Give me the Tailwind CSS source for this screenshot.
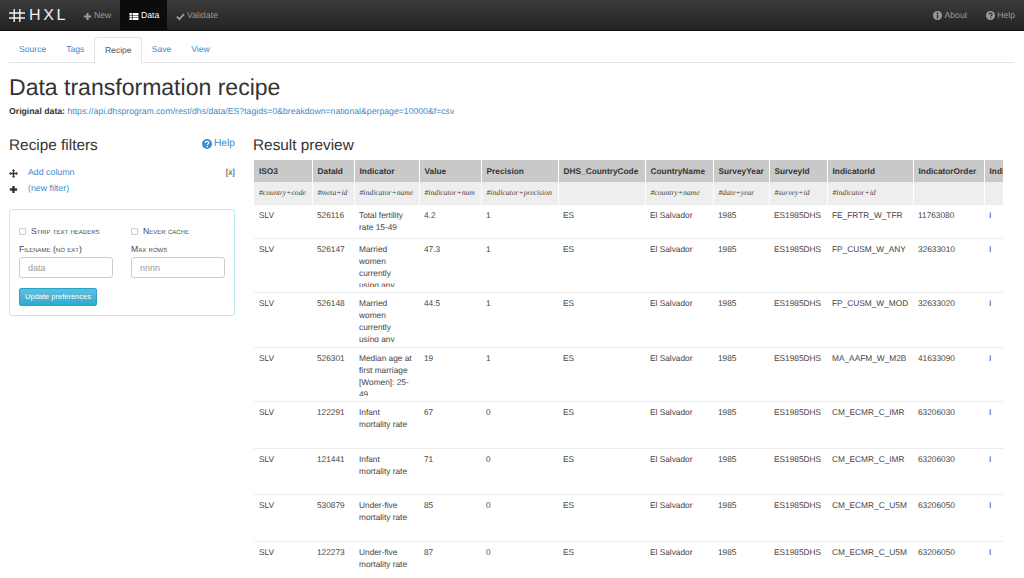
<!DOCTYPE html>
<html>
<head>
  <meta charset="utf-8">
  <script src="https://cdn.jsdelivr.net/npm/@tailwindcss/browser@4"></script>
  <script>
    const columns = [
      ['ISO3', '#country+code', 'w-[58px]'],
      ['DataId', '#meta+id', 'w-[42px]'],
      ['Indicator', '#indicator+name', 'w-[65px]'],
      ['Value', '#indicator+num', 'w-[62px]'],
      ['Precision', '#indicator+precision', 'w-[77px]'],
      ['DHS_CountryCode', '', 'w-[87px]'],
      ['CountryName', '#country+name', 'w-[68px]'],
      ['SurveyYear', '#date+year', 'w-[56px]'],
      ['SurveyId', '#survey+id', 'w-[58px]'],
      ['IndicatorId', '#indicator+id', 'w-[86px]'],
      ['IndicatorOrder', '', 'w-[71px]'],
      ['IndicatorType', '', 'w-[71px]'],
    ];

    // first item is the height of the clipped cell content
    const rows = [
      ['h-[24px]', 'SLV', '526116', 'Total fertility rate 15-49', '4.2', '1', 'FE_FRTR_W_TFR', '11763080'],
      ['h-[44px]', 'SLV', '526147', 'Married women currently using any method', '47.3', '1', 'FP_CUSM_W_ANY', '32633010'],
      ['h-[45px]', 'SLV', '526148', 'Married women currently using any modern', '44.5', '1', 'FP_CUSM_W_MOD', '32633020'],
      ['h-[44px]', 'SLV', '526301', 'Median age at first marriage [Women]: 25-49', '19', '1', 'MA_AAFM_W_M2B', '41633090'],
      ['h-[37px]', 'SLV', '122291', 'Infant mortality rate', '67', '0', 'CM_ECMR_C_IMR', '63206030'],
      ['h-[36px]', 'SLV', '121441', 'Infant mortality rate', '71', '0', 'CM_ECMR_C_IMR', '63206030'],
      ['h-[37px]', 'SLV', '530879', 'Under-five mortality rate', '85', '0', 'CM_ECMR_C_U5M', '63206050'],
      ['h-[38px]', 'SLV', '122273', 'Under-five mortality rate', '87', '0', 'CM_ECMR_C_U5M', '63206050'],
    ];

    function bodyRow(r) {
      const cells = [r[1], r[2], r[3], r[4], r[5], 'ES', 'El Salvador', '1985', 'ES1985DHS', r[6], r[7], 'I'];
      return `<tr class="border-t border-[#ececec]">` + cells.map(c =>
        `<td class="align-top pl-[5px] pr-[3px] pt-[4px] pb-[5px]"><div class="${r[0]} overflow-hidden leading-[12px] pr-[4px]">${c}</div></td>`
      ).join('') + `</tr>`;
    }

    window.onload = () => {
      document.getElementById('cols').innerHTML = columns.map(c => `<col class="${c[2]}">`).join('');
      document.getElementById('head').innerHTML = columns.map(c =>
        `<th class="bg-[#c9c9c9] border-r border-white text-left font-bold px-[5px] h-[22px] text-[#333] whitespace-nowrap overflow-hidden">${c[0]}</th>`
      ).join('');
      document.getElementById('tags').innerHTML = columns.map(c =>
        `<td class="bg-[#eeeeee] border-r border-white px-[5px] h-[22px] text-[7.68px] italic font-['Liberation_Serif',serif] text-[#444] whitespace-nowrap overflow-hidden">${c[1]}</td>`
      ).join('');
      document.getElementById('body').innerHTML = rows.map(bodyRow).join('');
    };
  </script>
</head>
<body class="h-[578px] overflow-hidden bg-white font-['Liberation_Sans',sans-serif] text-[#333] [text-rendering:geometricPrecision]">
  <!-- Navbar -->
  <nav class="flex h-[31px] justify-between bg-gradient-to-b from-[#3c3c3c] to-[#222222] border-b border-[#111] text-[8.7px] text-[#999]">
    <div class="flex items-center">
      <div class="flex items-center w-[83px] pl-[9px] pt-[1px]">
        <svg class="w-[16px] h-[13px]" viewBox="0 0 16 13" fill="none" stroke="#f2f2f2" stroke-width="1.4">
          <path d="M0 4h16M0 9h16M5.2 0v13M10.8 0v13"/>
        </svg>
        <span class="ml-[4px] text-[16px] leading-none tracking-[2.6px] text-[#eeeeee]">HXL</span>
      </div>
      <a class="flex items-center gap-[2px] h-full w-[37px] pt-[2px]">
        <svg class="w-[9px] h-[9px]" viewBox="0 0 10 10" fill="#999"><path d="M3.8 1h2.4v2.8H9v2.4H6.2V9H3.8V6.2H1V3.8h2.8z"/></svg>
        New
      </a>
      <a class="flex items-center gap-[2px] h-full w-[47px] pl-[9px] pt-[2px] bg-[#0c0c0c] text-white">
        <svg class="w-[10px] h-[9px]" viewBox="0 0 10 10" fill="#fff"><path d="M0 1h2.6v2.2H0zM3.4 1H10v2.2H3.4zM0 3.9h2.6v2.2H0zM3.4 3.9H10v2.2H3.4zM0 6.8h2.6V9H0zM3.4 6.8H10V9H3.4z"/></svg>
        Data
      </a>
      <a class="flex items-center gap-[2px] h-full pl-[9px] pt-[2px]">
        <svg class="w-[9px] h-[9px]" viewBox="0 0 10 10" fill="none" stroke="#999" stroke-width="2"><path d="M1 5.2l2.8 2.8L9 2.2"/></svg>
        Validate
      </a>
    </div>
    <div class="flex items-center pr-[9px] pt-[2px]">
      <a class="flex items-center gap-[2px] mr-[19px]">
        <svg class="w-[9px] h-[9px]" viewBox="0 0 10 10"><circle cx="5" cy="5" r="5" fill="#999"/><path d="M4.2 1.7h1.6v1.5H4.2zM4.2 4h1.6v4.2H4.2z" fill="#2c2c2c"/></svg>
        About
      </a>
      <a class="flex items-center gap-[2px]">
        <svg class="w-[9px] h-[9px]" viewBox="0 0 10 10"><circle cx="5" cy="5" r="5" fill="#999"/><path d="M3.3 4c0-2.2 3.5-2.2 3.5-.2 0 1.1-1.6 1.2-1.6 2.3" fill="none" stroke="#2c2c2c" stroke-width="1.2"/><path d="M4.4 6.9h1.4v1.3H4.4z" fill="#2c2c2c"/></svg>
        Help
      </a>
    </div>
  </nav>

  <main class="px-[9px]">
    <!-- Tabs -->
    <ul class="flex h-[26px] mt-[6px] border-b border-[#e4e4e4] text-[8.6px] text-[#428bca] w-[1005px]">
      <li class="flex items-center px-[10px]">Source</li>
      <li class="flex items-center px-[10px]">Tags</li>
      <li class="flex items-center pl-[9.5px] pr-[9px] h-[27px] bg-white border border-[#e4e4e4] border-b-white rounded-t-[3px] text-[#555]">Recipe</li>
      <li class="flex items-center px-[10px]">Save</li>
      <li class="flex items-center px-[10px]">View</li>
    </ul>

    <h1 class="mt-[10px] text-[23.04px] leading-[28px] font-normal text-[#333]">Data transformation recipe</h1>
    <p class="mt-[4px] text-[8.7px] leading-[12px]"><b>Original data:</b> <a class="text-[#428bca]">https://api.dhsprogram.com/rest/dhs/data/ES?tagids=0&amp;breakdown=national&amp;perpage=10000&amp;f=csv</a></p>

    <div class="flex mt-[19px]">
      <!-- Recipe filters -->
      <aside class="w-[226px] shrink-0">
        <div class="flex justify-between">
          <h2 class="text-[15.36px] leading-[17px] font-normal mt-[1px]">Recipe filters</h2>
          <a class="flex items-center gap-[2px] h-[11px] text-[10.24px] text-[#428bca] mt-[2px]">
            <svg class="w-[10px] h-[10px]" viewBox="0 0 10 10"><circle cx="5" cy="5" r="5" fill="#428bca"/><path d="M3.3 4c0-2.2 3.5-2.2 3.5-.2 0 1.1-1.6 1.2-1.6 2.3" fill="none" stroke="#fff" stroke-width="1.2"/><path d="M4.4 6.9h1.4v1.3H4.4z" fill="#fff"/></svg>
            Help
          </a>
        </div>
        <div class="flex items-center justify-between mt-[11px] h-[16px] text-[8.8px]">
          <div class="flex items-center">
            <svg class="w-[9px] h-[9px]" viewBox="0 0 10 10" fill="#333"><path d="M5 0l1.9 2H5.8v2.2H8V3.1L10 5 8 6.9V5.8H5.8V8h1.1L5 10 3.1 8h1.1V5.8H2v1.1L0 5l2-1.9v1.1h2.2V2H3.1z"/></svg>
            <a class="ml-[10px] text-[#428bca]">Add column</a>
          </div>
          <span class="text-[#444]">[x]</span>
        </div>
        <div class="flex items-center h-[16px] text-[8.8px]">
          <svg class="w-[9px] h-[9px]" viewBox="0 0 10 10" fill="#333"><path d="M3.7 1h2.6v2.7H9v2.6H6.3V9H3.7V6.3H1V3.7h2.7z"/></svg>
          <a class="ml-[10px] text-[#428bca]">(new filter)</a>
        </div>

        <form class="mt-[12px] h-[107px] border border-[#bce8f1] rounded-[3px] pl-[9px] pt-[15px]">
          <div class="grid grid-cols-[112px_94px] text-[8.6px] text-[#444] [font-variant:small-caps]">
            <label class="flex items-center h-[12px]"><span class="w-[7px] h-[7px] mr-[5px] border border-[#ccc] rounded-[1px] bg-white"></span>Strip text headers</label>
            <label class="flex items-center h-[12px]"><span class="w-[7px] h-[7px] mr-[5px] border border-[#ccc] rounded-[1px] bg-white"></span>Never cache</label>
            <span class="mt-[6px] h-[12px] leading-[12px]">Filename (no ext)</span>
            <span class="mt-[6px] h-[12px] leading-[12px]">Max rows</span>
            <input class="mt-[2px] w-[94px] h-[21px] px-[8px] border border-[#ccc] rounded-[3px] text-[8.96px] [font-variant:normal] placeholder:text-[#999]" placeholder="data">
            <input class="mt-[2px] w-[94px] h-[21px] px-[8px] border border-[#ccc] rounded-[3px] text-[8.96px] [font-variant:normal] placeholder:text-[#999]" placeholder="nnnn">
          </div>
          <button type="button" class="block mt-[10px] h-[18px] w-[78px] rounded-[2px] bg-gradient-to-b from-[#5bc0de] to-[#2aabd2] border border-[#28a4c9] text-[7.5px] text-white">Update preferences</button>
        </form>
      </aside>

      <!-- Result preview -->
      <section class="ml-[18px] w-[750px] overflow-hidden">
        <h2 class="text-[15.36px] leading-[17px] font-normal mt-[1px]">Result preview</h2>
        <div class="mt-[6px] ml-[1px] w-[749px] overflow-hidden">
          <table class="table-fixed w-[801px] border-collapse text-[8.32px] text-[#444] opacity-[.99]">
            <colgroup id="cols"></colgroup>
            <thead><tr id="head"></tr></thead>
            <tbody>
              <tr id="tags"></tr>
            </tbody>
            <tbody id="body"></tbody>
          </table>
        </div>
      </section>
    </div>
  </main>
</body>
</html>
